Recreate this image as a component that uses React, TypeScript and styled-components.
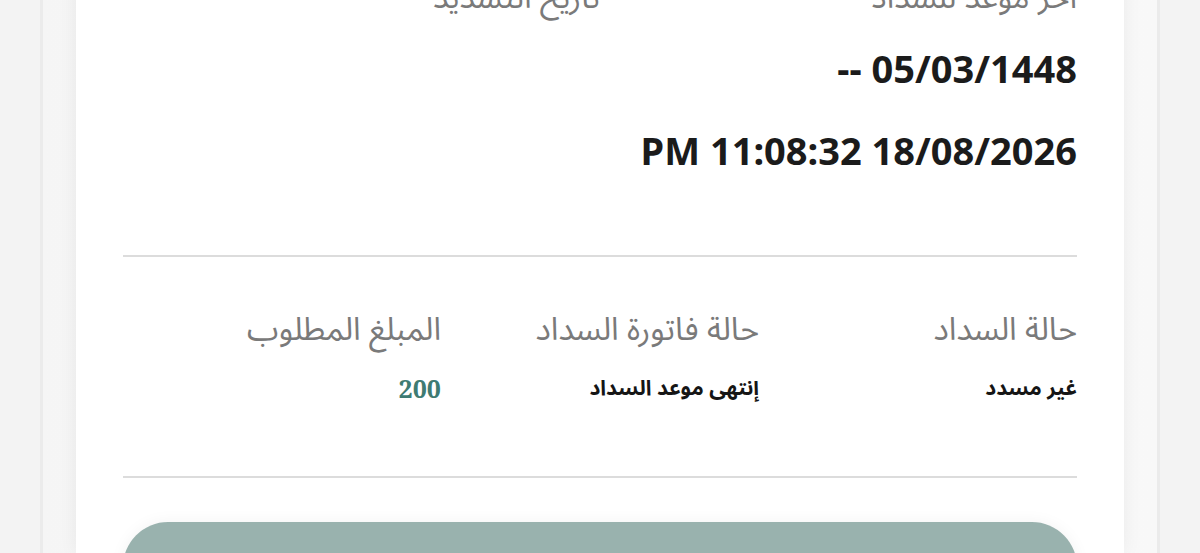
import React from 'react';
import styled, { createGlobalStyle } from 'styled-components';

const GlobalStyle = createGlobalStyle`
  html, body {
    margin: 0;
    padding: 0;
    background: #f3f3f3;
    overflow: hidden;
  }
  * {
    box-sizing: border-box;
  }
`;

const Page = styled.div`
  direction: rtl;
  width: 1200px;
  height: 553px;
  overflow: hidden;
  background: #f3f3f3;
  padding: 0 40px;
`;

const Panel = styled.div`
  display: flow-root;
  height: 100%;
  background: linear-gradient(90deg, #f5f5f5 0%, #fbfbfb 50%, #f8f8f8 100%);
  border-left: 3px solid #ebebeb;
  border-right: 3px solid #ebebeb;
  padding: 0 33px;
`;

const Card = styled.div`
  height: calc(100% + 22px);
  background: #fff;
  box-shadow: 0 0 18px rgba(0, 0, 0, 0.06);
  padding: 0 47px;
  margin-top: -22px;
  font-family: "Noto Sans Arabic", "DejaVu Sans", "Noto Sans", sans-serif;
`;

const TopLabels = styled.div`
  display: grid;
  grid-template-columns: 1fr 1fr;
  height: 44px;
`;

const Label = styled.div`
  font-size: 32px;
  line-height: 40px;
  color: #7a7a7a;
  font-weight: 400;
  white-space: nowrap;
`;

const DateLine = styled.div`
  direction: ltr;
  text-align: right;
  font-family: "Noto Sans", "Open Sans", sans-serif;
  font-weight: 700;
  font-size: 38px;
  line-height: 48px;
  color: #1b1b1b;
  margin-top: ${p => p.$top}px;
`;

const Divider = styled.hr`
  border: none;
  height: 2px;
  background: #dcdcdc;
  margin: ${p => p.$top}px 0 0;
`;

const InfoGrid = styled.div`
  display: grid;
  grid-template-columns: repeat(3, 1fr);
  padding-top: 53px;
  padding-bottom: 73px;
`;

const Cell = styled.div`
  display: flex;
  flex-direction: column;
  gap: 23px;
`;

const Value = styled.div`
  font-weight: 700;
  line-height: 30px;
  color: ${p => (p.$accent ? '#3e7b73' : '#151515')};
  font-family: ${p =>
    p.$accent ? '"Noto Serif", "DejaVu Serif", serif' : '"Noto Sans Arabic", "DejaVu Sans", sans-serif'};
  font-size: ${p => (p.$accent ? 25 : 21)}px;
`;

const PayButton = styled.button`
  display: block;
  width: 100%;
  height: 90px;
  margin-top: 44px;
  border: none;
  border-radius: 46px;
  background: #99b2ae;
  box-shadow: 0 0 16px rgba(0, 0, 0, 0.05);
`;

const info = [
  { label: 'حالة السداد', value: 'غير مسدد' },
  { label: 'حالة فاتورة السداد', value: 'إنتهى موعد السداد' },
  { label: 'المبلغ المطلوب', value: '200', accent: true },
];

export default function App() {
  return (
    <>
      <GlobalStyle />
      <Page>
        <Panel>
          <Card>
            <TopLabels>
              <Label>آخر موعد للسداد</Label>
              <Label>تاريخ التسديد</Label>
            </TopLabels>
            <DateLine $top={22}>-- 05/03/1448</DateLine>
            <DateLine $top={34}>PM 11:08:32 18/08/2026</DateLine>
            <Divider $top={81} />
            <InfoGrid>
              {info.map(item => (
                <Cell key={item.label}>
                  <Label>{item.label}</Label>
                  <Value $accent={item.accent}>{item.value}</Value>
                </Cell>
              ))}
            </InfoGrid>
            <Divider $top={0} />
            <PayButton />
          </Card>
        </Panel>
      </Page>
    </>
  );
}
